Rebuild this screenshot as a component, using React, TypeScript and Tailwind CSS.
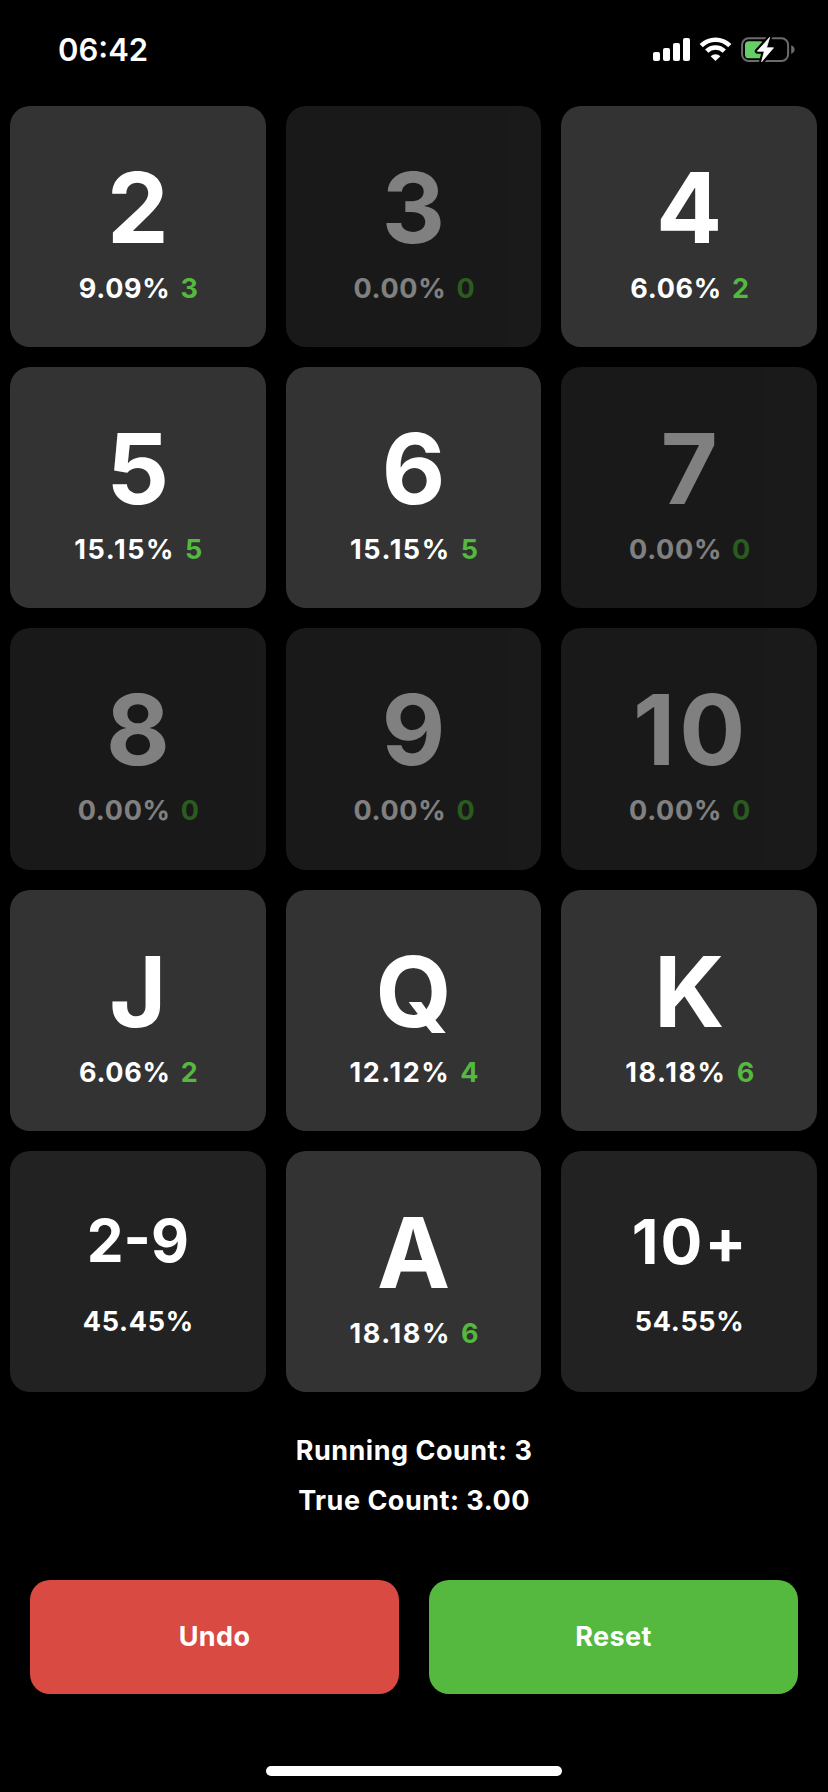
import clsx from "clsx"

type Card = {
  label: string
  percent: string
  count?: number
}

const CARDS: Card[] = [
  { label: "2", percent: "9.09%", count: 3 },
  { label: "3", percent: "0.00%", count: 0 },
  { label: "4", percent: "6.06%", count: 2 },
  { label: "5", percent: "15.15%", count: 5 },
  { label: "6", percent: "15.15%", count: 5 },
  { label: "7", percent: "0.00%", count: 0 },
  { label: "8", percent: "0.00%", count: 0 },
  { label: "9", percent: "0.00%", count: 0 },
  { label: "10", percent: "0.00%", count: 0 },
  { label: "J", percent: "6.06%", count: 2 },
  { label: "Q", percent: "12.12%", count: 4 },
  { label: "K", percent: "18.18%", count: 6 },
  { label: "2-9", percent: "45.45%" },
  { label: "A", percent: "18.18%", count: 6 },
  { label: "10+", percent: "54.55%" }
]

function StatusBar() {
  return (
    <header className="flex h-[106px] shrink-0 items-start justify-between pt-[30px] pr-[33px] pl-[58px]">
      <span className="text-[31px] leading-10 font-semibold">06:42</span>
      <svg width="142" height="26" viewBox="0 0 142 26" className="mt-[7px] overflow-visible" fill="none">
        {/* signal */}
        <g fill="#fff">
          <rect x="0" y="15" width="7" height="9" rx="2" />
          <rect x="10" y="11" width="7" height="13" rx="2" />
          <rect x="20" y="6" width="7" height="18" rx="2" />
          <rect x="30" y="1" width="7" height="23" rx="2" />
        </g>
        {/* wifi */}
        <g stroke="#fff" strokeWidth="4.6">
          <path d="M48.2 8.6a20.3 20.3 0 0 1 28.6 0" />
          <path d="M53.7 14.2a12.4 12.4 0 0 1 17.6 0" />
        </g>
        <path d="M62.5 24l-4.9-4.8a7 7 0 0 1 9.8 0z" fill="#fff" />
        {/* battery */}
        <rect x="89.1" y="1.3" width="46" height="22.6" rx="6.5" stroke="#6b6b6b" strokeWidth="2" />
        <path d="M138.2 8.3c2.2.8 3.4 2.4 3.4 4.3s-1.2 3.5-3.4 4.3z" fill="#6b6b6b" />
        <rect x="92" y="4.2" width="19" height="17" rx="3.5" fill="#65ce66" />
        <path
          d="M116.6.4l-12.3 13.8h7l-2.7 10.6 11.9-14h-7z"
          stroke="#000"
          strokeWidth="5"
          strokeLinejoin="round"
        />
        <path
          d="M116.6.4l-12.3 13.8h7l-2.7 10.6 11.9-14h-7z"
          fill="#fff"
          stroke="#fff"
          strokeWidth="0.8"
          strokeLinejoin="round"
        />
      </svg>
    </header>
  )
}

function CardButton({ card }: { card: Card }) {
  const isGroup = card.count === undefined

  return (
    <button
      className={clsx(
        "flex flex-col items-center justify-center rounded-[20px] pt-px font-[650]",
        isGroup ? "bg-[#222222]" : "bg-[#333333]",
        card.count === 0 && "opacity-50"
      )}
    >
      <span
        className={clsx(
          "font-bold",
          !isGroup && "mb-1 text-[98px] leading-[120px]",
          card.label === "10" && "pl-1 tracking-[4px]",
          card.label === "2-9" && "mb-7 text-[58.5px] leading-[72px]",
          card.label === "10+" && "mb-[25px] pl-0.5 text-[62px] leading-[76px] tracking-[2px]"
        )}
      >
        {card.label}
      </span>
      <span className="flex gap-2.5 pl-px text-[27px] leading-[34px]">
        <span className={card.percent.startsWith("1") ? "tracking-[1.6px]" : "tracking-[0.7px]"}>
          {card.percent}
        </span>
        {!isGroup && <span className="text-[#55b83f]">{card.count}</span>}
      </span>
    </button>
  )
}

export default function App() {
  return (
    <div className="flex h-[1792px] w-[828px] flex-col overflow-hidden bg-black font-['Inter',sans-serif] text-white">
      <StatusBar />
      <main className="grid h-[1286px] shrink-0 grid-cols-3 grid-rows-5 gap-5 pr-[11px] pl-2.5">
        {CARDS.map((card) => (
          <CardButton key={card.label} card={card} />
        ))}
      </main>
      <section className="flex flex-col items-center pt-[34px] text-[27px] leading-[50px] font-[650] tracking-[0.5px]">
        <p>Running Count: 3</p>
        <p>True Count: 3.00</p>
      </section>
      <div className="mt-[54px] flex h-[114px] shrink-0 gap-[30px] px-[30px] text-[27px] font-[650] tracking-[0.4px]">
        <button className="flex-1 rounded-[20px] bg-[#d94a42] pt-px">Undo</button>
        <button className="flex-1 rounded-[20px] bg-[#55b83f] pt-px">Reset</button>
      </div>
      <div className="mx-auto mt-[72px] h-2.5 w-[296px] rounded-full bg-white" />
    </div>
  )
}
